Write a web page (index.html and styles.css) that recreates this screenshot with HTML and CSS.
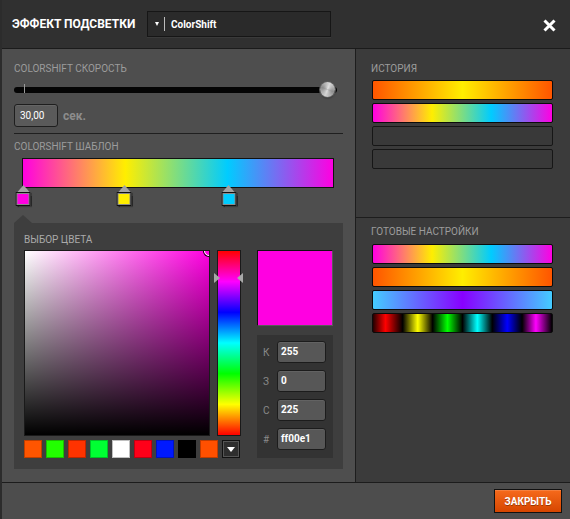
FILE: index.html
```html
<!DOCTYPE html>
<html lang="ru">
<head>
<meta charset="utf-8">
<title>Эффект подсветки</title>
<link rel="stylesheet" href="styles.css">
</head>
<body>
<div class="window">
  <header class="titlebar">
    <h1 class="title">ЭФФЕКТ ПОДСВЕТКИ</h1>
    <div class="select">
      <span class="caret"></span>
      <span class="sep"></span>
      <span class="select-val">ColorShift</span>
    </div>
    <button class="close" aria-label="Закрыть">
      <svg width="13" height="13" viewBox="0 0 13 13"><path d="M1.5 1.5 L11.5 11.5 M11.5 1.5 L1.5 11.5" stroke="#fff" stroke-width="3" fill="none"/></svg>
    </button>
  </header>

  <div class="main">
    <section class="left">
      <div class="label">COLORSHIFT СКОРОСТЬ</div>
      <div class="slider">
        <div class="track"></div>
        <span class="tick"></span>
        <span class="knob" style="left:306px"></span>
      </div>
      <div class="speed-row">
        <div class="num-input">30,00</div>
        <span class="unit">сек.</span>
      </div>
      <div class="divider"></div>

      <div class="label label-2">COLORSHIFT ШАБЛОН</div>
      <div class="grad-bar"></div>
      <div class="stops">
        <div class="stop" style="left:0.4%"><span class="stop-tri"></span><span class="stop-sq"><span class="stop-col" style="background:#ff00e1"></span></span></div>
        <div class="stop" style="left:32.8%"><span class="stop-tri"></span><span class="stop-sq"><span class="stop-col" style="background:#ffee00"></span></span></div>
        <div class="stop" style="left:66.2%"><span class="stop-tri"></span><span class="stop-sq"><span class="stop-col" style="background:#00ccff"></span></span></div>
      </div>
      <div class="pointer"></div>
      <div class="picker">
        <div class="picker-label">ВЫБОР ЦВЕТА</div>
        <div class="picker-row">
          <div class="pick-left">
            <div class="sv-row">
              <div class="sv"><span class="sv-mark"></span></div>
              <div class="hue-wrap">
                <div class="hue"></div>
                <span class="hue-arrow hue-arrow-l" style="top:23px"></span>
                <span class="hue-arrow hue-arrow-r" style="top:23px"></span>
              </div>
            </div>
            <div class="swatches">
              <span class="swatch" style="background:#ff5500"></span>
              <span class="swatch" style="background:#22ff00"></span>
              <span class="swatch" style="background:#ff3300"></span>
              <span class="swatch" style="background:#00ff33"></span>
              <span class="swatch" style="background:#ffffff"></span>
              <span class="swatch" style="background:#ff0019"></span>
              <span class="swatch" style="background:#0019ff"></span>
              <span class="swatch" style="background:#000000"></span>
              <span class="swatch" style="background:#ff5000"></span>
              <span class="swatch-more"><span class="more-tri"></span></span>
            </div>
          </div>
          <div class="pick-right">
            <div class="preview"></div>
            <div class="fields">
              <div class="field"><span class="f-label">К</span><span class="f-input">255</span></div>
              <div class="field"><span class="f-label">З</span><span class="f-input">0</span></div>
              <div class="field"><span class="f-label">С</span><span class="f-input">225</span></div>
              <div class="field"><span class="f-label">#</span><span class="f-input">ff00e1</span></div>
            </div>
          </div>
        </div>
      </div>
    </section>

    <aside class="right">
      <div class="section history">
        <div class="label">ИСТОРИЯ</div>
        <div class="bars">
          <div class="bar g-orange"></div>
          <div class="bar g-rainbow"></div>
          <div class="bar bar-empty"></div>
          <div class="bar bar-empty"></div>
        </div>
      </div>
      <div class="section presets">
        <div class="label">ГОТОВЫЕ НАСТРОЙКИ</div>
        <div class="bars bars-presets">
          <div class="bar g-rainbow"></div>
          <div class="bar g-orange"></div>
          <div class="bar g-blue"></div>
          <div class="bar g-bands"></div>
        </div>
      </div>
    </aside>
  </div>

  <footer class="footer">
    <button class="btn-close">ЗАКРЫТЬ</button>
  </footer>
</div>
</body>
</html>
```
FILE: styles.css
```css
* { box-sizing: border-box; margin: 0; padding: 0; }
html, body { width: 570px; height: 519px; overflow: hidden; background: #303030; }
body { font-family: Roboto, "Liberation Sans", sans-serif; font-size: 10px; color: #fff; }

.window {
  width: 570px; height: 519px;
  display: flex; flex-direction: column;
  border-left: 2px solid #2c2c2c;
}

/* title bar */
.titlebar {
  height: 49px; flex: none;
  background: #303030;
  border-bottom: 1px solid #1b1b1b;
  display: flex; align-items: center;
  padding: 0 14px 0 10px;
}
.title { width: 135px; font-size: 12px; font-weight: 700; color: #fff; line-height: 14px; }
.select {
  width: 184px; height: 26px;
  background: #2a2a2a;
  border: 1px solid #161616;
  box-shadow: 0 1px 0 #3a3a3a;
  display: flex; align-items: center;
}
.caret {
  margin-left: 7px;
  width: 0; height: 0;
  border-left: 2.5px solid transparent;
  border-right: 2.5px solid transparent;
  border-top: 4px solid #fff;
}
.sep { width: 1px; height: 14px; background: #bbb; margin-left: 5px; }
.select-val { margin-left: 6px; font-weight: 700; font-size: 10px; color: #fff; }
.close {
  margin-left: auto;
  background: none; border: none;
  width: 13px; height: 13px;
  display: flex; margin-top: 3px;
}

/* main */
.main { flex: 1; display: flex; min-height: 0; }
.left { width: 353px; background: #4e4e4e; padding: 14px 12px 0 12px; }
.right { flex: 1; background: #3b3b3b; border-left: 1px solid #1d1d1d; display: flex; flex-direction: column; }

.label { font-size: 10px; line-height: 12px; color: #9c9c9c; white-space: nowrap; }

.slider { position: relative; height: 16px; margin-top: 7px; display: flex; align-items: center; }
.track { flex: 1; height: 6px; margin-right: 6px; background: #050505; border-radius: 3px; }
.tick { position: absolute; left: 10px; top: 2px; width: 1px; height: 9px; background: #9a9a9a; }
.knob {
  position: absolute; top: 0; width: 15px; height: 15px; border-radius: 50%;
  background:
    radial-gradient(circle at 50% 50%, rgba(255,255,255,.35) 0, rgba(255,255,255,0) 45%),
    conic-gradient(from 20deg, #d9d9d9, #8d8d8d 25%, #d2d2d2 50%, #8a8a8a 75%, #d9d9d9);
  box-shadow: 0 0 0 1px #5a5a5a, 0 1px 2px rgba(0,0,0,.6);
}

.speed-row { margin-top: 6px; display: flex; align-items: center; }
.num-input {
  width: 44px; height: 23px;
  background: #5a5a5a; border: 1px solid #1e1e1e; border-radius: 3px;
  box-shadow: inset 0 1px 0 rgba(255,255,255,.07);
  padding-left: 5px; line-height: 21px; font-size: 10px; color: #fff;
}
.unit { margin-left: 5px; font-size: 12px; font-weight: 700; color: #8c8c8c; }

.divider { margin-top: 6px; height: 1px; background: #1f1f1f; }
.label-2 { margin-top: 7px; }

.grad-bar {
  margin: 5px 9px 0 8px; height: 30px;
  border: 1px solid #111;
  background: linear-gradient(to right, #ff00e1 0%, #ffee00 33%, #00ccff 66%, #ff00e1 100%);
}
.stops { position: relative; height: 19px; margin: 0 9px 0 8px; }
.stop {
  position: absolute; top: -3px; width: 15px;
  transform: translateX(-50%);
  display: flex; flex-direction: column; align-items: center;
}
.stop-tri {
  width: 0; height: 0;
  border-left: 6px solid transparent; border-right: 6px solid transparent;
  border-bottom: 7px solid #a3a3a3;
}
.stop-sq {
  width: 15px; height: 14px;
  background: #8a8a8a; border: 1px solid #111;
  padding: 1px;
  box-shadow: 1px 1px 1px rgba(0,0,0,.5);
  display: flex;
}
.stop-col { flex: 1; }

.pointer {
  margin-top: 8px; width: 0; height: 0;
  border-left: 9px solid transparent; border-right: 9px solid transparent;
  border-bottom: 8px solid #3e3e3e;
}
.picker { height: 246px; background: #3e3e3e; padding: 11px 10px; }
.picker-label { font-size: 10px; line-height: 12px; color: #aaa; }
.picker-row { margin-top: 4px; display: flex; }
.pick-left { width: 217px; display: flex; flex-direction: column; }
.sv-row { display: flex; gap: 7px; }
.sv {
  position: relative; overflow: hidden;
  width: 186px; height: 186px;
  border: 1px solid #1a1a1a;
  background:
    linear-gradient(to top, #000 0%, rgba(0,0,0,0) 100%),
    linear-gradient(to right, #fff 0%, #ff00e1 100%);
}
.sv-mark {
  position: absolute; right: -5px; top: -5px;
  width: 10px; height: 10px; border-radius: 50%;
  border: 1.5px solid #fff; box-shadow: 0 0 0 1px #000;
}
.hue-wrap { position: relative; width: 24px; height: 186px; }
.hue {
  width: 24px; height: 186px; border: 1px solid #1a1a1a;
  background: linear-gradient(to bottom, #f00 0%, #f0f 16.67%, #00f 33.33%, #0ff 50%, #0f0 66.67%, #ff0 83.33%, #f00 100%);
}
.hue-arrow { position: absolute; width: 0; height: 0; border-top: 5px solid transparent; border-bottom: 5px solid transparent; }
.hue-arrow-l { left: -3px; border-left: 6px solid #a8a8a8; }
.hue-arrow-r { right: -2px; border-right: 6px solid #a8a8a8; }

.swatches { margin-top: 4px; display: flex; gap: 4px; }
.swatch { width: 18px; height: 18px; box-shadow: inset 0 0 0 1px rgba(0,0,0,.25); }
.swatch-more {
  width: 18px; height: 18px;
  background: #2e2e2e; border: 1px solid #111;
  box-shadow: inset 0 0 0 1px #555;
  display: flex; align-items: center; justify-content: center;
}
.more-tri { width: 0; height: 0; border-left: 4px solid transparent; border-right: 4px solid transparent; border-top: 5px solid #fff; }

.pick-right { margin-left: 16px; width: 76px; }
.preview { width: 76px; height: 76px; background: #ff00e1; border: 1px solid; border-color: #111 #5a5a5a #5a5a5a #111; }
.fields {
  margin-top: 9px; height: 123px; background: #333;
  padding: 6px 7px 8px 6px;
  display: flex; flex-direction: column; gap: 7px;
}
.field { display: flex; align-items: center; height: 22px; }
.f-label { width: 14px; font-size: 10px; color: #8a8a8a; }
.f-input {
  width: 49px; height: 22px;
  background: #575757; border: 1px solid #1c1c1c; border-radius: 3px;
  box-shadow: inset 0 1px 0 rgba(255,255,255,.07);
  padding-left: 3px; line-height: 20px;
  font-size: 10px; font-weight: 700; color: #fff;
}

/* right column */
.section { padding: 14px 17px 0 15px; }
.history { height: 169px; flex: none; border-bottom: 1px solid #1d1d1d; }
.presets { padding-top: 8px; }
.bars { margin: 5px 0 0 1px; display: flex; flex-direction: column; gap: 3px; }
.bars-presets { margin-top: 6px; }
.bar { height: 20px; width: 181px; border: 1px solid #0b0b0b; border-radius: 2px; }
.bar-empty { background: #393939; border-color: #161616; }
.g-orange { background: linear-gradient(to right, #ff5500 0%, #ffee00 50%, #ff5500 100%); }
.g-rainbow { background: linear-gradient(to right, #ff00e1 0%, #ffee00 33%, #00ccff 66%, #ff00e1 100%); }
.g-blue { background: linear-gradient(to right, #44ccff 0%, #8800ff 50%, #44ccff 100%); }
.g-bands {
  background: linear-gradient(to right,
    #200 0%, #f00 7%, #000 16.6%, #ff0 25%, #000 33.3%, #0f0 41.6%, #000 50%,
    #0ff 58.3%, #000 66.6%, #00f 75%, #000 83.3%, #f0f 91%, #000 100%);
}

/* footer */
.footer {
  height: 37px; flex: none;
  background: #4d4d4d; border-top: 1px solid #1c1c1c;
  display: flex; justify-content: flex-end; align-items: flex-start;
  padding: 6px 8px 0 0;
}
.btn-close {
  width: 68px; height: 24px;
  border: 1px solid #111;
  background: linear-gradient(#f66a1c, #d64600);
  box-shadow: inset 0 1px 0 rgba(255,255,255,.15);
  color: #fff; font-family: Roboto, "Liberation Sans", sans-serif;
  font-size: 10px; font-weight: 700;
  text-shadow: 0 1px 0 rgba(0,0,0,.35);
}
```
